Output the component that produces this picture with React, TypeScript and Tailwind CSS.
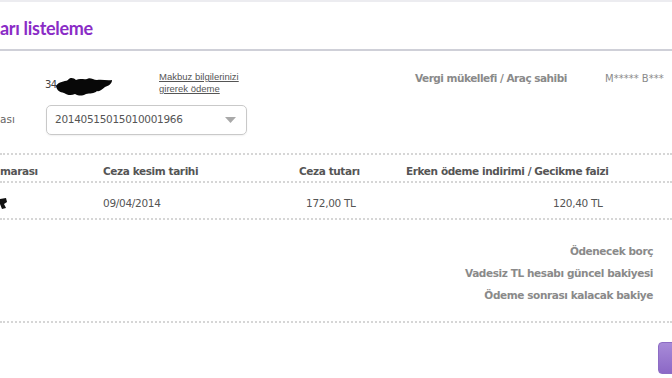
export default function App() {
  return (
    <div className="relative h-[378px] w-[672px] overflow-hidden bg-white font-['DejaVu_Sans',sans-serif] text-[#555]">
      <div className="h-[2px] bg-[#ececf0]" />
      <div className="flex h-[47px] items-center pt-[6px]">
        <h1 className="font-['Lato',sans-serif] text-[18px] font-bold tracking-[-0.3px] text-[#8a2cc6]">arı listeleme</h1>
      </div>
      <div className="h-[2px] bg-[#cfd0d8]" />

      <div className="flex h-[52px] items-start text-[11px]">
        <div className="ml-[45px] mt-[25px] flex h-[18px] w-[114px] items-center">
          <span className="text-[10px] leading-[12px] tracking-[-0.5px] text-[#444]">34</span>
          <svg width="58" height="18" viewBox="0 0 58 18" className="-ml-[2px] block translate-y-[2px]">
            <path d="M1 8 C4 3 9 4 13 2 C15 -1 19 0 21 2 C25 0 29 2 32 1 C35 -1 38 2 42 2 C47 1 52 3 57 2 C57 6 53 8 50 9 C47 11 45 14 42 13 C39 16 35 15 31 16 C27 18 24 18 20 16 C16 18 12 17 9 15 C5 14 2 13 1 8 Z" fill="#080808" />
          </svg>
        </div>
        <div className="mt-[20px] w-[256px] font-['Liberation_Sans',sans-serif] text-[9.5px] leading-[12px] text-[#555] underline">
          Makbuz bilgilerinizi
          <br />
          girerek ödeme
        </div>
        <div className="mt-[20px] w-[190px] text-[10.5px] font-semibold tracking-[-0.5px] text-[#8a8a8a]">Vergi mükellefi / Araç sahibi</div>
        <div className="mt-[20px] text-[10px] text-[#8a8a8a]">M***** B***</div>
      </div>

      <div className="flex h-[34px] items-center">
        <span className="w-[46px] text-[10.5px] text-[#666]">ası</span>
        <div className="flex h-[30px] w-[201px] items-center justify-between rounded-[5px] border border-[#c9c9c9] pl-[8px] pr-[10px] shadow-[0_1px_2px_rgba(0,0,0,0.06)]">
          <span className="text-[10.5px] tracking-[-0.3px] text-[#555]">20140515015010001966</span>
          <svg width="11" height="6" viewBox="0 0 11 6">
            <path d="M0 0 H11 L5.5 6 Z" fill="#a9a9a9" />
          </svg>
        </div>
      </div>

      <div className="mt-[16px] border-t-2 border-dotted border-[#d6d6d6]" />
      <div className="flex pb-[3px] pt-[9px] text-[10.5px] font-bold leading-[14px] tracking-[-0.4px] text-[#555]">
        <span className="w-[103px]">marası</span>
        <span className="w-[196px]">Ceza kesim tarihi</span>
        <span className="w-[107px]">Ceza tutarı</span>
        <span>Erken ödeme indirimi / Gecikme faizi</span>
      </div>
      <div className="border-t-2 border-dotted border-[#d6d6d6]" />
      <div className="flex items-center pb-[8px] pt-[13px] text-[10.5px] leading-[14px] tracking-[-0.3px] text-[#555]">
        <span className="flex w-[103px] items-center">
          <svg width="7" height="11" viewBox="0 0 7 11">
            <path d="M0 1 L6 0 L7 4 L4 6 L6 10 L2 11 L0 6 Z" fill="#111" />
          </svg>
        </span>
        <span className="w-[203px]">09/04/2014</span>
        <span className="w-[247px]">172,00 TL</span>
        <span>120,40 TL</span>
      </div>
      <div className="border-t-2 border-dotted border-[#d6d6d6]" />

      <div className="flex flex-col items-end gap-[6px] pr-[19px] pt-[23px] text-[10.5px] font-semibold tracking-[-0.4px] text-[#8a8a8a]">
        <span className="leading-[16px]">Ödenecek borç</span>
        <span className="leading-[16px]">Vadesiz TL hesabı güncel bakiyesi</span>
        <span className="leading-[16px]">Ödeme sonrası kalacak bakiye</span>
      </div>
      <div className="mt-[18px] border-t-2 border-dotted border-[#d6d6d6]" />

      <div className="flex justify-end pt-[19px]">
        <div className="-mr-[10px] h-[32px] w-[24px] rounded-[4px] border border-[#8d6cc4] bg-gradient-to-b from-[#a88bd8] to-[#8c68c6]" />
      </div>
    </div>
  )
}
